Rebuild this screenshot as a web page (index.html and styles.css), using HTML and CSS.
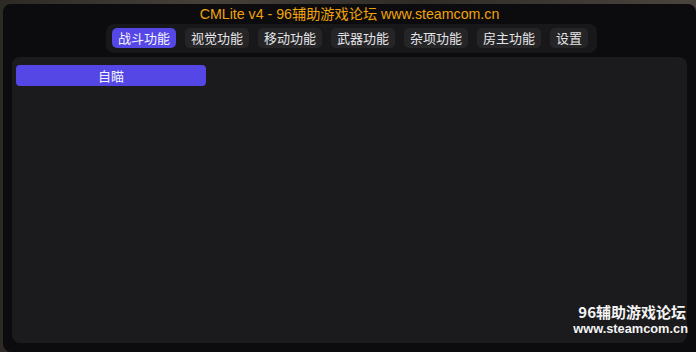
FILE: index.html
```html
<!DOCTYPE html>
<html lang="zh">
<head>
<meta charset="utf-8">
<title>CMLite v4</title>
<link rel="stylesheet" href="styles.css">
</head>
<body>
<div class="desktop">
  <div class="window">
    <div class="title">CMLite v4 - 96辅助游戏论坛 www.steamcom.cn</div>
    <div class="tabrow">
      <div class="tabbar">
        <span class="tab active">战斗功能</span>
        <span class="tab">视觉功能</span>
        <span class="tab">移动功能</span>
        <span class="tab">武器功能</span>
        <span class="tab">杂项功能</span>
        <span class="tab">房主功能</span>
        <span class="tab">设置</span>
      </div>
    </div>
    <div class="panel">
      <button class="btn">自瞄</button>
    </div>
  </div>
  <div class="watermark">
    <div class="wm1">96辅助游戏论坛</div>
    <div class="wm2">www.steamcom.cn</div>
  </div>
</div>
</body>
</html>
```
FILE: styles.css
```css
html, body {
  margin: 0;
  padding: 0;
  width: 696px;
  height: 352px;
  overflow: hidden;
  background: #3b3631;
  font-family: "Liberation Sans", "Noto Sans CJK SC", sans-serif;
}
.desktop {
  position: relative;
  width: 696px;
  height: 352px;
  padding: 4px 0 0 3px;
  box-sizing: border-box;
  background: linear-gradient(90deg, #2d2a26 0%, #46403a 30%, #2f2b27 60%, #4a443e 100%);
}
.window {
  width: 693px;
  height: 348px;
  box-sizing: border-box;
  background: #0c0c0e;
  border-radius: 8px 8px 0 8px;
  padding: 0 9px 9px 9px;
  display: flex;
  flex-direction: column;
}
.title {
  color: #f0a30a;
  font-size: 14.2px;
  line-height: 20px;
  height: 20px;
  text-align: center;
  font-family: "Liberation Sans", "Noto Sans CJK SC", sans-serif;
}
.tabrow {
  display: flex;
  justify-content: center;
  padding-left: 4px;
}
.tabbar {
  display: flex;
  gap: 9px;
  background: #18181b;
  border-radius: 8px;
  padding: 4px 9px 5px 6px;
}
.tab {
  display: block;
  height: 20px;
  line-height: 20px;
  padding: 0 6px;
  font-size: 13px;
  color: #e4e4e6;
  background: #252528;
  border-radius: 5px;
  font-family: "Noto Sans CJK SC", sans-serif;
}
.tab.active {
  background: #5447e6;
  color: #f4f4ff;
}
.panel {
  flex: 1;
  margin-top: 4px;
  background: #1b1b1d;
  border-radius: 8px;
  padding: 8px 4px;
}
.btn {
  display: block;
  width: 190px;
  height: 21px;
  border: none;
  border-radius: 4px;
  background: #5447e6;
  color: #f2f2ff;
  font-size: 13px;
  font-family: "Noto Sans CJK SC", sans-serif;
  padding: 0;
  line-height: 21px;
}
.watermark {
  position: absolute;
  right: 8px;
  top: 302px;
  text-align: right;
  color: #f4f4f4;
  font-weight: bold;
}
.wm1 {
  font-size: 15px;
  line-height: 19px;
  padding-right: 2px;
  font-family: "Noto Sans CJK SC", sans-serif;
  font-weight: bold;
}
.wm2 {
  font-size: 12.8px;
  line-height: 15px;
  font-family: "Liberation Sans", sans-serif;
  font-weight: bold;
}
```
